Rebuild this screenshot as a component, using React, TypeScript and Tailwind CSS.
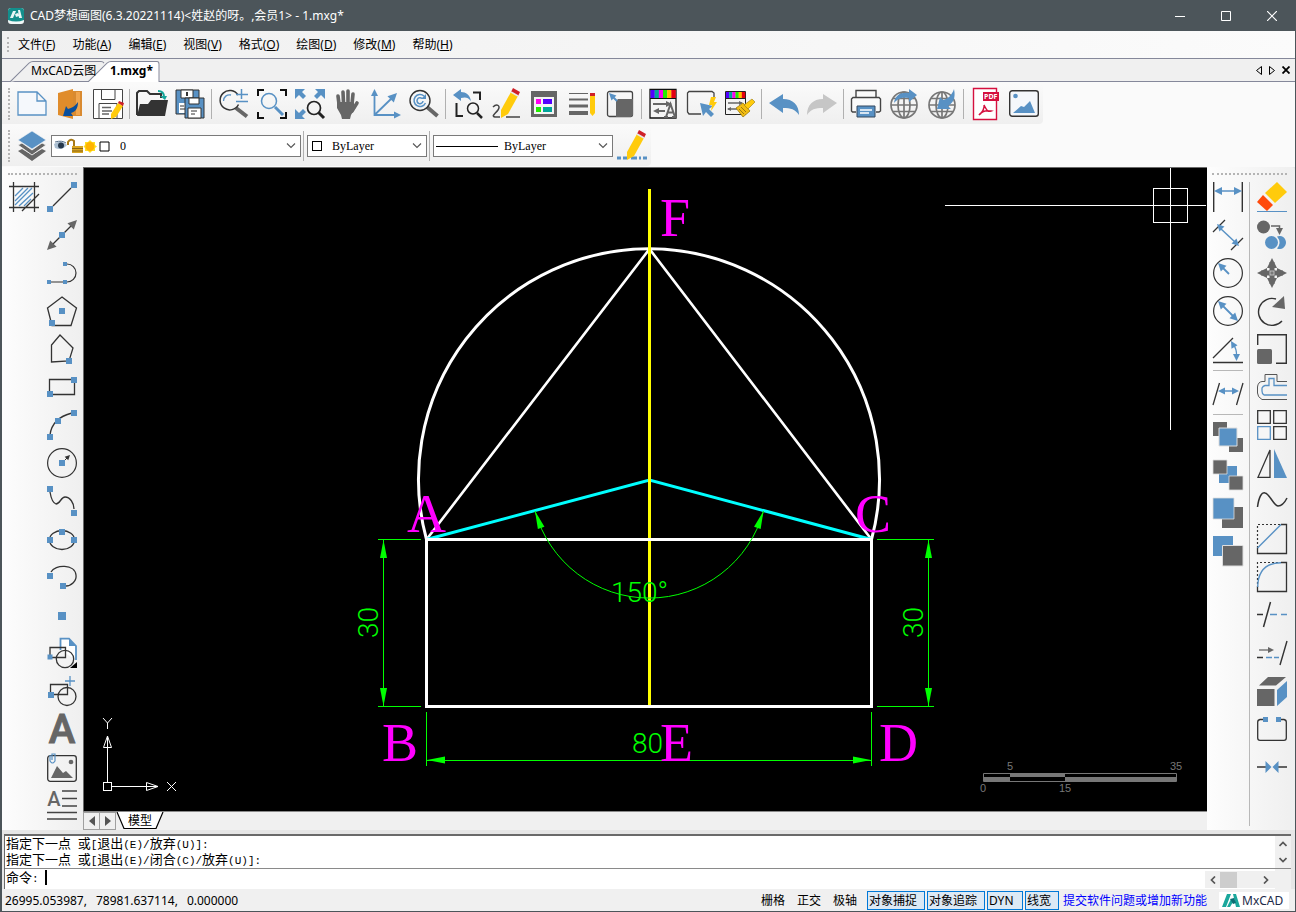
import { useState, type ReactNode } from "react";

const BLUE = "#5891c4";
const GREY = "#666666";
const DARK = "#333333";

const sans = "font-['Noto_Sans','Noto_Sans_CJK_SC',sans-serif]";

type ToolDef = { label: string; icon: ReactNode };

/* ---------- small drawing helpers, all icons live on a 30x30 grid ---------- */

function Handle({ x, y, s = 6 }: { x: number; y: number; s?: number }) {
  return <rect x={x - s / 2} y={y - s / 2} width={s} height={s} fill={BLUE} />;
}

function Head({ x, y, a, s = 7, c = BLUE }: { x: number; y: number; a: number; s?: number; c?: string }) {
  return (
    <path
      d={`M0 0L${-s} ${-s / 2}V${s / 2}Z`}
      transform={`translate(${x} ${y}) rotate(${a})`}
      fill={c}
      stroke="none"
    />
  );
}

function Pencil() {
  return (
    <g>
      <path d="M20 3L27 7L17 25L10 29L10 21Z" fill="#ffcb0c" />
      <path d="M20 3L22 -1L29 3L27 7Z" fill="#cf2028" />
      <path d="M20 3L27 7" stroke="#e8e8e8" strokeWidth="1.500" />
    </g>
  );
}

function Rainbow({ w, h }: { w: number; h: number }) {
  const colors = ["#5200ff", "#00a59b", "#ff00f0", "#22ee00", "#ffbe00", "#e60012"];
  return (
    <>
      {colors.map((c, i) => (
        <rect key={c} x={(w / 6) * i} y="0" width={w / 6 + 0.2} height={h} fill={c} />
      ))}
    </>
  );
}

function Globe() {
  return (
    <g fill="none" stroke="#777" strokeWidth="1.700">
      <circle cx="15" cy="16" r="13" />
      <ellipse cx="15" cy="16" rx="6" ry="13" />
      <path d="M15 3V29M2 16H28M4 9.500H26M4 22.500H26" />
    </g>
  );
}

/* ------------------------------- top toolbar ------------------------------- */

const topGroups: ToolDef[][] = [
  [
    {
      label: "新建",
      icon: (
        <path d="M1 3H20L29 12V26H1ZM20 3V12H29" fill="#f5f8fc" stroke={BLUE} strokeWidth="1.300" />
      ),
    },
    {
      label: "打开云图",
      icon: (
        <>
          <path d="M18 2H27V27H18Z" fill="#d98a30" />
          <path d="M21 3H25V26H21Z" fill="#f0a54e" />
          <path d="M3 4L18 0V30L3 26Z" fill="#e08c2b" />
          <path d="M23 13C23 20 20 23 16 24L18 27L8 27L11 17L13 20C17 19 20 17 23 13Z" fill="#0a4f9c" />
        </>
      ),
    },
    {
      label: "保存",
      icon: (
        <>
          <path d="M.5.500H29.500V29.500H.500Z" fill="#fff" stroke="#444" />
          <path d="M8.500.500H22V10.500H8.500ZM6 29.500V14.500H24V29.500" fill="none" stroke="#444" />
          <path d="M9 18.500H18M9 22H19M9 25H16" stroke="#666" strokeWidth="1.500" />
          <path d="M25 14L30 17L23 28L18 30L18 25Z" fill="#ffcb0c" />
          <path d="M25 14L26 12L31 14L30 17Z" fill="#cf2028" />
        </>
      ),
    },
  ],
  [
    {
      label: "打开",
      icon: (
        <>
          <path d="M0 26V4L2 2H10L13 5H24V9" fill="none" stroke={DARK} strokeWidth="2" />
          <path d="M0 27L3 15H11L14 11H31L28 27Z" fill={DARK} />
          <path d="M21 2Q27 2 27 8" fill="none" stroke="#13a59a" strokeWidth="2" />
          <path d="M23 7H30L28 11Z" fill="#13a59a" />
        </>
      ),
    },
    {
      label: "全部保存",
      icon: (
        <>
          <path d="M1 1H24V25H1Z" fill={BLUE} stroke="#333" />
          <path d="M6 1H18V9H6Z" fill="#fff" stroke="#333" />
          <path d="M12 3V7" stroke="#333" strokeWidth="2" />
          <path d="M4 14H12V24H4Z" fill="#fff" />
          <path d="M5 17H9M5 20H10" stroke="#333" />
          <path d="M10 9H29V29H10Z" fill={BLUE} stroke="#333" />
          <path d="M14 9H24V15H14ZM13 19H26V29H13Z" fill="#fff" stroke="#333" />
          <path d="M16 22H22M16 25H20" stroke="#333" />
        </>
      ),
    },
  ],
  [
    {
      label: "缩放",
      icon: (
        <>
          <path d="M17 19L28 27.500" stroke={GREY} strokeWidth="4" />
          <path d="M19 6A9.700 9.700 0 1 0 19.500 15.500" fill="none" stroke={DARK} strokeWidth="1.500" />
          <path d="M4.500 12A6 6 0 0 1 12 6" fill="none" stroke={BLUE} strokeWidth="1.300" />
          <path d="M17 5.500H29M22.500 0V10M17 12.500H29" stroke={BLUE} strokeWidth="1.500" />
        </>
      ),
    },
    {
      label: "窗口缩放",
      icon: (
        <>
          <path d="M1 7V1H7M23 1H29V7M29 23V29H23M7 29H1V23" fill="none" stroke="#111" strokeWidth="2" />
          <circle cx="12" cy="12" r="7.500" fill="none" stroke={BLUE} strokeWidth="1.500" />
          <path d="M18 18L26 26" stroke={BLUE} strokeWidth="3" />
        </>
      ),
    },
    {
      label: "范围缩放",
      icon: (
        <>
          <path d="M0 0H10L7 3L11 7L8 10L4 6L0 10ZM30 0H20L23 3L19 7L22 10L26 6L30 10ZM0 30H10L7 27L11 23L8 20L4 24L0 20Z" fill={BLUE} />
          <circle cx="19" cy="19" r="6.500" fill="none" stroke="#222" strokeWidth="1.700" />
          <path d="M23.500 23.500L29 29" stroke="#222" strokeWidth="3" />
        </>
      ),
    },
    {
      label: "平移",
      icon: (
        <>
          <path d="M6 15L5 7M10.500 14L10 3M15 14V2M19 15L20 5M19 22L24 14" stroke={GREY} strokeWidth="3.600" strokeLinecap="round" />
          <path d="M4 13H21V19L23 18L18 26L17 30H9L8 26L4 19Z" fill={GREY} />
        </>
      ),
    },
    {
      label: "坐标系",
      icon: (
        <>
          <path d="M3.500 5V26H27M3.500 26L22 8" fill="none" stroke={BLUE} strokeWidth="1.800" />
          <Head x={3.5} y={0} a={-90} />
          <Head x={30} y={26} a={0} />
          <Head x={26} y={4} a={-45} s={9} />
        </>
      ),
    },
    {
      label: "实时缩放",
      icon: (
        <>
          <path d="M18 18L28.500 27" stroke={GREY} strokeWidth="4" />
          <circle cx="11" cy="11.500" r="10" fill="none" stroke={DARK} strokeWidth="1.400" />
          <path d="M15 7A6 6 0 1 0 16.500 14M13 9.500A3 3 0 1 0 14 12" fill="none" stroke={BLUE} strokeWidth="1.500" />
          <path d="M17 5V10H12Z" fill={BLUE} />
        </>
      ),
    },
  ],
  [
    {
      label: "上一视图",
      icon: (
        <>
          <path d="M0 6L8 0V3C13 3 17 6 18 12C15 8 12 8 8 9V12Z" fill={BLUE} />
          <path d="M20 3.500H27V11M3.500 14V27H10" fill="none" stroke="#222" strokeWidth="2" />
          <circle cx="20" cy="19.500" r="5.500" fill="none" stroke="#222" strokeWidth="1.500" />
          <path d="M24 24L29 29" stroke="#222" strokeWidth="2.500" />
        </>
      ),
    },
    {
      label: "草图",
      icon: (
        <>
          <path d="M2 18C6 14 10 17 7 21C4 25 0 27 4 28L9 28M15 28H29" fill="none" stroke="#444" strokeWidth="1.500" />
          <Pencil />
        </>
      ),
    },
    {
      label: "特性",
      icon: (
        <>
          <path d="M2 2H28V28H2Z" fill={GREY} />
          <path d="M5 8H25V25H5Z" fill="#f4f4f4" />
          <path d="M7 10H12V15H7Z" fill="#ff00f0" />
          <path d="M14 10H23V15H14Z" fill="#5200ff" />
          <path d="M7 18H12V23H7Z" fill="#22ee00" />
          <path d="M14 18H23V23H14Z" fill="#00a59b" />
        </>
      ),
    },
    {
      label: "线宽设置",
      icon: (
        <>
          <path d="M2 4.500H21" stroke={GREY} />
          <path d="M2 10.500H21" stroke={GREY} strokeWidth="2" />
          <path d="M2 17H21" stroke={GREY} strokeWidth="3" />
          <path d="M2 24H21" stroke={GREY} strokeWidth="4" />
          <path d="M23 7H28V24L25.500 27L23 24Z" fill="#ffcb0c" />
          <path d="M23 4H28V7H23Z" fill="#cf2028" />
        </>
      ),
    },
    {
      label: "窗口大小",
      icon: (
        <>
          <rect x="2.500" y="2.500" width="25" height="25" rx="2" fill="none" stroke="#444" strokeWidth="1.300" />
          <path d="M11 12L13 10H28V26L26 28H11Z" fill={GREY} />
          <path d="M7 7L12 12" stroke={BLUE} strokeWidth="2" />
          <Head x={4} y={4} a={225} />
        </>
      ),
    },
  ],
  [
    {
      label: "文字样式",
      icon: (
        <>
          <path d="M1 .500H27V29H1Z" fill="#f4f4f4" stroke="#111" strokeWidth="1.300" />
          <g transform="translate(1.500 1)">
            <Rainbow w={25} h={8} />
          </g>
          <path d="M1 9.500H27" stroke="#111" />
          <path d="M4 15H22M8 22H16" stroke={GREY} strokeWidth="2" />
          <Head x={23} y={15} a={0} s={6} c={GREY} />
          <Head x={4} y={22} a={180} s={6} c={GREY} />
          <path d="M17 28L21.500 15L26 28M18.500 23.500H24.500M15 28H19M23 28H27" fill="none" stroke={GREY} strokeWidth="2" />
        </>
      ),
    },
    {
      label: "快速选择",
      icon: (
        <>
          <path d="M14 25H2L.500 23V4L2 2.500H25L27 4V9" fill="none" stroke="#444" strokeWidth="1.300" />
          <path d="M13 14L26 17L22 20L27 25L24 28L19 23L16 27Z" fill={BLUE} />
          <path d="M24 8L22 16H25L24 22L30 13H27L29 8Z" fill="#ffcb0c" />
        </>
      ),
    },
    {
      label: "特性匹配",
      icon: (
        <>
          <path d="M.500 2.500H20.500V25.500H.500Z" fill="#f4f4f4" stroke="#222" />
          <g transform="translate(1 3)">
            <Rainbow w={19} h={6} />
          </g>
          <path d="M0 9.500H21" stroke="#222" />
          <path d="M3 14H17M3 20H12" stroke={GREY} strokeWidth="1.500" />
          <Head x={18} y={14} a={0} s={4} c={GREY} />
          <Head x={2} y={20} a={180} s={4} c={GREY} />
          <path d="M11 19L18 14L25 22L18 28Z" fill="#f2bd12" stroke="#9b7a10" strokeWidth=".8" />
          <path d="M19 16L27 10L30 13L23 20Z" fill="#ffcb0c" stroke="#9b7a10" strokeWidth=".6" />
          <path d="M14 20L19 25M16 18L21 23" stroke="#9b7a10" />
        </>
      ),
    },
  ],
  [
    {
      label: "撤销",
      icon: <path d="M0 14L14 5V10C24 10 30 16 30 26C26 20 22 19 14 19V24Z" fill={BLUE} />,
    },
    {
      label: "重做",
      icon: <path d="M30 14L16 5V10C6 10 0 16 0 26C4 20 8 19 16 19V24Z" fill="#c6c6c6" />,
    },
  ],
  [
    {
      label: "打印",
      icon: (
        <>
          <path d="M5 8V1.500H25V8M5 23H1.500L.500 22V10L2 8.500H28L29.500 10V22L28 23H25" fill="#fafafa" stroke="#444" strokeWidth="1.400" />
          <path d="M6 17H24V28H6Z" fill={BLUE} stroke="#34495e" />
          <path d="M9 21H21M9 24H18" stroke="#fff" strokeWidth="1.300" />
        </>
      ),
    },
    {
      label: "发布到网络",
      icon: (
        <>
          <Globe />
          <path d="M5 14C6 6 12 3 20 4V0L28 6L20 13V9C13 8 9 9 5 14Z" fill={BLUE} />
        </>
      ),
    },
    {
      label: "从网络打开",
      icon: (
        <>
          <Globe />
          <path d="M27 0C29 9 26 14 21 17L24 20H10L13 8L16 11C21 10 25 6 27 0Z" fill={BLUE} />
        </>
      ),
    },
  ],
  [
    {
      label: "输出PDF",
      icon: (
        <>
          <path d="M2.500 -.500H25.500V30.500H2.500Z" fill="#fff" stroke="#d5103f" strokeWidth="1.400" />
          <path d="M12 3H28V12H12Z" fill="#d5103f" />
          <text x="13" y="10" fontSize="7" fontWeight="700" fill="#fff" fontFamily="Open Sans, sans-serif">
            PDF
          </text>
          <path d="M8 26C11 24 14 19 13 16C16 22 17 23 20 22C15 21 11 22 8 26Z" fill="none" stroke="#d5103f" strokeWidth="1.500" />
        </>
      ),
    },
    {
      label: "输出图片",
      icon: (
        <>
          <rect x=".700" y="1.700" width="28.600" height="25.600" rx="2.500" fill="#f4f7fb" stroke={DARK} strokeWidth="1.400" />
          <circle cx="6.500" cy="7" r="2.300" fill={BLUE} />
          <path d="M4 24L12 17L15 18L21 12L26 24Z" fill={BLUE} />
        </>
      ),
    },
  ],
];

/* ------------------------------- left toolbar ------------------------------ */

const hatch: ToolDef = {
  label: "图案填充",
  icon: (
    <>
      <path d="M6 14L14 6M6 19L19 6M6 23L23 6M10 24L24 11M15 24L22 17" stroke={BLUE} strokeWidth="1.300" />
      <path d="M4.500 0V30M25.500 0V30M0 4.500H30M0 25.500H30M30 12L13 29" stroke={DARK} strokeWidth="1.300" />
    </>
  ),
};

const drawTools: ToolDef[] = [
  {
    label: "直线",
    icon: (
      <>
        <path d="M6 24L24 6" stroke={DARK} strokeWidth="1.300" />
        <Handle x={3} y={27} />
        <Handle x={27} y={3} />
      </>
    ),
  },
  {
    label: "构造线",
    icon: (
      <>
        <path d="M5 25L25 5" stroke={DARK} strokeWidth="1.300" />
        <Head x={30} y={0} a={-45} s={9} c={GREY} />
        <Head x={0} y={30} a={135} s={9} c={GREY} />
        <Handle x={15} y={15} />
      </>
    ),
  },
  {
    label: "多段线",
    icon: (
      <>
        <path d="M4 24H18M20 6A9 9 0 0 1 20 24" fill="none" stroke={DARK} strokeWidth="1.200" />
        <Handle x={18} y={6} s={4} />
        <Handle x={2} y={24} s={4} />
        <Handle x={18} y={24} s={4} />
      </>
    ),
  },
  {
    label: "正多边形",
    icon: (
      <>
        <path d="M15 1L29.500 12L24 29.500H5L.500 12Z" fill="none" stroke={DARK} strokeWidth="1.300" />
        <Handle x={15} y={15} />
        <Handle x={5} y={27} />
      </>
    ),
  },
  {
    label: "多边形",
    icon: (
      <>
        <path d="M13 1L26 14L22 27L4.500 28V11Z" fill="none" stroke={DARK} strokeWidth="1.300" />
        <Handle x={22} y={27} />
      </>
    ),
  },
  {
    label: "矩形",
    icon: (
      <>
        <path d="M2.500 7.500H27.500V22.500H2.500Z" fill="none" stroke={DARK} strokeWidth="1.300" />
        <Handle x={27} y={8} />
        <Handle x={3} y={22} />
      </>
    ),
  },
  {
    label: "圆弧",
    icon: (
      <>
        <path d="M3 25Q5 8 25 3" fill="none" stroke={DARK} strokeWidth="1.300" />
        <Handle x={27} y={3} />
        <Handle x={11} y={11} />
        <Handle x={3} y={27} />
      </>
    ),
  },
  {
    label: "圆",
    icon: (
      <>
        <circle cx="15" cy="15" r="14.400" fill="none" stroke={DARK} strokeWidth="1.200" />
        <path d="M16 14L21 9" stroke={DARK} />
        <Head x={23} y={7} a={-45} s={5} c={DARK} />
        <Handle x={15} y={15} />
      </>
    ),
  },
  {
    label: "样条曲线",
    icon: (
      <>
        <path d="M3 6C4 12 6 17 9 18C13 18 14 11 18 11C23 11 27 17 27 23" fill="none" stroke={DARK} strokeWidth="1.300" />
        <Handle x={3} y={3} />
        <Handle x={27} y={27} />
      </>
    ),
  },
  {
    label: "椭圆",
    icon: (
      <>
        <ellipse cx="15" cy="16" rx="12.500" ry="9.500" fill="none" stroke={DARK} strokeWidth="1.300" />
        <Handle x={15} y={8} />
        <Handle x={3} y={16} />
        <Handle x={27} y={16} />
      </>
    ),
  },
  {
    label: "椭圆弧",
    icon: (
      <>
        <path d="M4 10C8 2 28 2 29 13C30 19 24 24 19 24" fill="none" stroke={DARK} strokeWidth="1.300" />
        <Handle x={3} y={14} />
        <Handle x={16} y={24} />
      </>
    ),
  },
  { label: "点", icon: <Handle x={15} y={16} s={8} /> },
  {
    label: "插入块",
    icon: (
      <>
        <path d="M13.500 12V.700H22L29 8V22" fill="#fff" stroke={BLUE} strokeWidth="1.800" />
        <path d="M22 1V8H29Z" fill={BLUE} />
        <path d="M3 9.500H18.500V19.500H3Z" fill="none" stroke={DARK} strokeWidth="1.300" />
        <circle cx="18" cy="21" r="8.700" fill="none" stroke={DARK} strokeWidth="1.300" />
        <Handle x={3} y={19} s={5} />
        <path d="M30 24V30H23Z" fill="#000" />
      </>
    ),
  },
  {
    label: "创建块",
    icon: (
      <>
        <path d="M3.500 8.500H20.500V18.500H3.500Z" fill="none" stroke={DARK} strokeWidth="1.300" />
        <circle cx="20" cy="20.500" r="9" fill="none" stroke={DARK} strokeWidth="1.300" />
        <path d="M18 5H28M23 0V10" stroke={BLUE} strokeWidth="1.300" />
        <Handle x={4} y={19} />
      </>
    ),
  },
  {
    label: "单行文字",
    icon: (
      <text x="15" y="29" fontSize="40" fontWeight="500" fill={GREY} stroke={GREY} textAnchor="middle" fontFamily="Roboto, sans-serif">
        A
      </text>
    ),
  },
  {
    label: "插入图片",
    icon: (
      <>
        <rect x=".700" y="3.700" width="28.600" height="25.600" rx="2.500" fill="none" stroke={DARK} strokeWidth="1.300" />
        <path d="M3 3V9Q5.500 13 8 9V2H5V8" fill="none" stroke={BLUE} strokeWidth="1.200" />
        <circle cx="24" cy="10" r="2.300" fill={GREY} />
        <path d="M4 26L10 14L16 21L19 19L26 26Z" fill={GREY} />
      </>
    ),
  },
  {
    label: "多行文字",
    icon: (
      <>
        <text x="7" y="16" fontSize="20" fontWeight="500" fill={GREY} textAnchor="middle" fontFamily="Roboto, sans-serif">
          A
        </text>
        <path d="M15 1H30M15 8.500H30M15 16H30M0 22.500H30M0 29H30" stroke="#444" strokeWidth="1.400" />
      </>
    ),
  },
];

/* ------------------------------ right toolbar ------------------------------ */

const dimTools: ToolDef[] = [
  {
    label: "线性标注",
    icon: (
      <>
        <path d="M.700 0V30M29.300 0V30" stroke={DARK} strokeWidth="1.400" />
        <path d="M6 9H24" stroke={BLUE} strokeWidth="1.500" />
        <Head x={1} y={9} a={180} s={8} />
        <Head x={29} y={9} a={0} s={8} />
      </>
    ),
  },
  {
    label: "对齐标注",
    icon: (
      <>
        <path d="M0 12L12 0M18 30L30 18" stroke={DARK} strokeWidth="1.300" />
        <path d="M7 8L22 22" stroke={BLUE} strokeWidth="1.500" />
        <Head x={4} y={4} a={225} />
        <Head x={26} y={26} a={45} />
      </>
    ),
  },
  {
    label: "半径标注",
    icon: (
      <>
        <circle cx="15" cy="15" r="14.400" fill="none" stroke={DARK} strokeWidth="1.200" />
        <path d="M8 8L16 16" stroke={BLUE} strokeWidth="1.800" />
        <Head x={5} y={5} a={225} s={8} />
      </>
    ),
  },
  {
    label: "直径标注",
    icon: (
      <>
        <circle cx="15" cy="15" r="14.400" fill="none" stroke={DARK} strokeWidth="1.200" />
        <path d="M8 8L22 22" stroke={BLUE} strokeWidth="1.800" />
        <Head x={5} y={5} a={225} s={8} />
        <Head x={25} y={25} a={45} s={8} />
      </>
    ),
  },
  {
    label: "角度标注",
    icon: (
      <>
        <path d="M0 24L20 4M0 28.500H30" stroke={DARK} strokeWidth="1.300" />
        <path d="M20 10Q24 15 23.500 22" fill="none" stroke={BLUE} strokeWidth="1.300" />
        <Head x={18} y={7} a={240} />
        <Head x={23.5} y={27} a={90} />
      </>
    ),
  },
];

const editDim: ToolDef = {
  label: "编辑标注",
  icon: (
    <>
      <path d="M0 27L6.500 5M23.500 27L30 5" stroke={DARK} strokeWidth="1.300" />
      <path d="M9 13H23" stroke={BLUE} strokeWidth="1.500" />
      <Head x={5} y={13} a={180} />
      <Head x={26} y={13} a={0} />
    </>
  ),
};

const orderTools: ToolDef[] = [
  {
    label: "前置",
    icon: (
      <>
        <path d="M0 1H14V15H0ZM16 17H30V31H16Z" fill={GREY} />
        <path d="M6 7H24V25H6Z" fill={BLUE} stroke="#ddd" />
      </>
    ),
  },
  {
    label: "后置",
    icon: (
      <>
        <path d="M6 7H24V24H6Z" fill={BLUE} />
        <path d="M0 1H14V15H0ZM16 17H30V31H16Z" fill={GREY} stroke="#ddd" strokeWidth=".8" />
      </>
    ),
  },
  {
    label: "置于对象之上",
    icon: (
      <>
        <path d="M9 10H30V31H9Z" fill={GREY} />
        <path d="M0 1H21V22H0Z" fill={BLUE} stroke="#ddd" strokeWidth=".8" />
      </>
    ),
  },
  {
    label: "置于对象之下",
    icon: (
      <>
        <path d="M0 1H20V21H0Z" fill={BLUE} />
        <path d="M9.500 10.500H30V31H9.500Z" fill={GREY} stroke="#ddd" />
      </>
    ),
  },
];

const modifyTools: ToolDef[] = [
  {
    label: "删除",
    icon: (
      <>
        <path d="M20 0L30 10L18 21L8 11Z" fill="#ffcb0c" />
        <path d="M6 13L16 23L10 29L0 20Z" fill="#ff4a0c" />
        <path d="M0 29.500H30" stroke={BLUE} />
      </>
    ),
  },
  {
    label: "复制",
    icon: (
      <>
        <circle cx="6.500" cy="7" r="6.500" fill={GREY} />
        <path d="M14 6H22.500V11" fill="none" stroke={GREY} strokeWidth="1.500" />
        <Head x={22.5} y={15} a={90} c={GREY} />
        <circle cx="14.500" cy="22.500" r="6.500" fill={BLUE} />
        <path d="M20 16.500A6.500 6.500 0 1 1 20 28.500Q25 22.500 20 16.500Z" fill={BLUE} />
      </>
    ),
  },
  {
    label: "移动",
    icon: (
      <>
        <path d="M15 4V26M4 15H26" stroke={GREY} strokeWidth="5" />
        <Head x={15} y={0} a={-90} s={10} c={GREY} />
        <Head x={15} y={30} a={90} s={10} c={GREY} />
        <Head x={0} y={15} a={180} s={10} c={GREY} />
        <Head x={30} y={15} a={0} s={10} c={GREY} />
        <path d="M13 13H17V17H13Z" fill="#777" stroke="#ccc" strokeWidth=".8" />
      </>
    ),
  },
  {
    label: "旋转",
    icon: (
      <>
        <path d="M19 3A13.500 13.500 0 1 0 25 25" fill="none" stroke={DARK} strokeWidth="1.400" />
        <path d="M27 0L28 13L15 11Z" fill={GREY} />
      </>
    ),
  },
  {
    label: "缩放对象",
    icon: (
      <>
        <path d="M.700 11V.700H29.300V29.300H19" fill="none" stroke={DARK} strokeWidth="1.400" />
        <rect x="0" y="15" width="15" height="15" rx="1.500" fill={GREY} />
      </>
    ),
  },
  {
    label: "偏移",
    icon: (
      <>
        <path d="M30 27.500H5Q.500 25 .500 21V15Q1 10 5 9.500H8V2.500H20V9.500H30" fill="none" stroke="#555" />
        <path d="M30 23H7Q5 22 5 19V16Q6 14 8 13.500H12V6.500H17V13.500H30" fill="none" stroke={BLUE} strokeWidth="1.300" />
      </>
    ),
  },
  {
    label: "阵列",
    icon: (
      <>
        <path d="M.700.700H13.300V13.300H.700ZM16.700.700H29.300V13.300H16.700ZM16.700 16.700H29.300V29.300H16.700Z" fill="#f6f6f6" stroke={DARK} strokeWidth="1.300" />
        <path d="M.700 16.700H13.300V29.300H.700Z" fill="#f6f6f6" stroke={BLUE} strokeWidth="1.300" />
      </>
    ),
  },
  {
    label: "镜像",
    icon: (
      <>
        <path d="M13 2V29.300H1Z" fill="none" stroke={DARK} strokeWidth="1.300" />
        <path d="M17 1L30 30H17Z" fill={BLUE} />
      </>
    ),
  },
  {
    label: "编辑样条",
    icon: <path d="M.500 21C2 10 5 6 8 7C13 8 16 19 21 20C25 20 28 16 30 12" fill="none" stroke={DARK} strokeWidth="1.500" />,
  },
  {
    label: "倒角",
    icon: (
      <>
        <path d="M.500 24V.500H24" fill="none" stroke={DARK} strokeWidth="1.200" strokeDasharray="2 2" />
        <path d="M24 .500H29.500V29.500H.500V24" fill="none" stroke={DARK} strokeWidth="1.300" />
        <path d="M.500 24L24 .500" stroke={BLUE} strokeWidth="1.400" />
      </>
    ),
  },
  {
    label: "圆角",
    icon: (
      <>
        <path d="M.500 22V.500H24" fill="none" stroke={DARK} strokeWidth="1.200" strokeDasharray="2 2" />
        <path d="M24 .500H29.500V29.500H.500V24" fill="none" stroke={DARK} strokeWidth="1.300" />
        <path d="M.700 25Q1 1 24 .700" fill="none" stroke={BLUE} strokeWidth="1.400" />
      </>
    ),
  },
  {
    label: "修剪",
    icon: (
      <>
        <path d="M0 14.500H6M6.500 27L13.500 2" stroke={DARK} strokeWidth="1.500" />
        <path d="M13 14.500H20M24 14.500H30" stroke={BLUE} strokeWidth="1.500" />
      </>
    ),
  },
  {
    label: "延伸",
    icon: (
      <>
        <path d="M2 12H13" stroke={GREY} strokeWidth="1.300" />
        <Head x={17} y={12} a={0} s={6} c={GREY} />
        <path d="M0 19.500H6M23 27L30 3" stroke={DARK} strokeWidth="1.400" />
        <path d="M9 19.500H15M17 19.500H22" stroke={BLUE} strokeWidth="1.400" />
      </>
    ),
  },
  {
    label: "分解",
    icon: (
      <>
        <path d="M11 1H29L19 9.500H2ZM0 13H17.500V30H0Z" fill={GREY} />
        <path d="M20 14L30 5V21L20 30Z" fill={BLUE} />
      </>
    ),
  },
  {
    label: "打断",
    icon: (
      <>
        <path d="M7 5.500H3Q.700 6 .700 8V24Q.700 26.300 3 26.300H27Q29.300 26.300 29.300 24V8Q29.300 6 27 5.500H23" fill="none" stroke={DARK} strokeWidth="1.300" />
        <Handle x={8.5} y={5.5} s={5} />
        <Handle x={21.5} y={5.5} s={5} />
      </>
    ),
  },
  {
    label: "合并",
    icon: (
      <>
        <path d="M0 15H9M21 15H30" stroke={DARK} strokeWidth="1.400" />
        <path d="M8.500 9L14.500 15L8.500 21ZM21.500 9L15.500 15L21.500 21Z" fill={BLUE} />
      </>
    ),
  },
];

/* -------------------------------- components ------------------------------- */

function Tool({ label, icon }: ToolDef) {
  return (
    <button type="button" aria-label={label} className="flex h-[38px] w-[38px] shrink-0 items-center justify-center hover:bg-[#d9eafa]">
      <svg viewBox="0 0 30 30" className="h-[30px] w-[30px] overflow-visible">
        {icon}
      </svg>
    </button>
  );
}

function GripV() {
  return <span className="w-0 self-stretch border-l-2 border-dotted border-[#b4b4b4]" />;
}

function Divider() {
  return <span className="mx-[2px] h-[30px] w-[2px] border-l border-[#b0b0b0]" />;
}

function Chevron() {
  return (
    <svg viewBox="0 0 10 6" className="mr-1 h-[6px] w-[10px] shrink-0">
      <path d="M1 .500L5 4.500L9 .500" fill="none" stroke="#555" strokeWidth="1.100" />
    </svg>
  );
}

function TitleBar() {
  return (
    <header className="flex h-[31px] shrink-0 items-center bg-[#4c555a] pl-2 pr-px text-white">
      <svg viewBox="0 0 16 16" className="h-4 w-4">
        <rect width="16" height="16" rx="3" fill="#f2f7f7" />
        <path d="M0 3Q0 0 3 0H13Q16 0 16 3V12Q8 15 0 12Z" fill="#138f8c" />
        <path d="M5 3H8L5 10H2ZM10 2H12L14 10H11ZM7 6L10 5L11 8L8 9Z" fill="#e8f6f5" />
      </svg>
      <h1 className="ml-1.5 grow text-[12px] leading-4">CAD梦想画图(6.3.20221114)&lt;姓赵的呀。,会员1&gt; - 1.mxg*</h1>
      <button type="button" aria-label="最小化" className="flex h-full w-[46px] items-center justify-center">
        <svg viewBox="0 0 10 10" className="h-[10px] w-[10px]">
          <path d="M0 5.500H10" stroke="#fff" />
        </svg>
      </button>
      <button type="button" aria-label="最大化" className="flex h-full w-[46px] items-center justify-center">
        <svg viewBox="0 0 10 10" className="h-[10px] w-[10px]">
          <path d="M.500.500H9.500V9.500H.500Z" fill="none" stroke="#fff" />
        </svg>
      </button>
      <button type="button" aria-label="关闭" className="flex h-full w-[46px] items-center justify-center">
        <svg viewBox="0 0 10 10" className="h-[10px] w-[10px]">
          <path d="M0 0L10 10M10 0L0 10" stroke="#fff" strokeWidth="1.200" />
        </svg>
      </button>
    </header>
  );
}

const menus = [
  ["文件", "F"],
  ["功能", "A"],
  ["编辑", "E"],
  ["视图", "V"],
  ["格式", "O"],
  ["绘图", "D"],
  ["修改", "M"],
  ["帮助", "H"],
];

function MenuBar() {
  return (
    <nav className="flex h-[27px] shrink-0 items-center gap-[17px] bg-linear-to-r from-[#f0f0f0] to-[#fbfbfb] pl-[5px] text-[12px]">
      <span className="h-[15px] w-0 border-l-2 border-dotted border-[#b4b4b4]" />
      {menus.map(([name, key], i) => (
        <button key={key} type="button" className={i === 0 ? "-ml-2" : ""}>
          {name}(<span className="underline">{key}</span>)
        </button>
      ))}
    </nav>
  );
}

function FileTabs() {
  return (
    <div className="flex h-[24px] shrink-0 items-end border-y border-[#85889a] bg-[#f0f0f0] text-[12px]">
      <div className="relative flex h-[20px] items-center">
        <svg viewBox="0 0 160 20" className="absolute left-0 top-0 h-[21px] w-[160px]" preserveAspectRatio="none">
          <path d="M8 20L27 2Q29 .500 31 .500H99Q101 .500 102 2" fill="#f0f0f0" stroke="#85889a" />
          <path d="M86 20L105 2Q107 .500 109 .500H155Q157 .500 157 3V20" fill="#fff" stroke="#85889a" />
        </svg>
        <button type="button" className="relative ml-[29px] w-[67px] whitespace-nowrap text-left">
          MxCAD云图
        </button>
        <button type="button" className="relative ml-3 font-bold">
          1.mxg*
        </button>
      </div>
      <div className="ml-auto flex h-full items-center gap-[7px] pr-[5px]">
        <button type="button" aria-label="上一个">
          <svg viewBox="0 0 6 9" className="h-[9px] w-[6px]">
            <path d="M5.500.500V8.500L.500 4.500Z" fill="none" stroke="#000" />
          </svg>
        </button>
        <button type="button" aria-label="下一个">
          <svg viewBox="0 0 6 9" className="h-[9px] w-[6px]">
            <path d="M.500.500V8.500L5.500 4.500Z" fill="none" stroke="#000" />
          </svg>
        </button>
        <button type="button" aria-label="关闭图纸">
          <svg viewBox="0 0 8 8" className="h-[8px] w-[8px]">
            <path d="M.500.500L7.500 7.500M7.500.500L.500 7.500" stroke="#000" strokeWidth="1.800" />
          </svg>
        </button>
      </div>
    </div>
  );
}

function Toolbars() {
  return (
    <div className="flex shrink-0 flex-col items-start gap-[2px] bg-[#fafafa] pb-px pt-[2px]">
      <div className="flex h-[40px] items-center rounded-r bg-linear-to-b from-[#fafafa] to-[#efefef] py-1 pl-[6px]">
        <GripV />
        <span className="w-[3px]" />
        {topGroups.map((group, i) => (
          <div key={i} className="flex items-center">
            {i > 0 && <Divider />}
            {group.map((t) => (
              <Tool key={t.label} {...t} />
            ))}
          </div>
        ))}
      </div>
      <div className="flex h-[40px] items-center rounded-r bg-linear-to-b from-[#fafafa] to-[#efefef] py-1 pl-[6px] font-['Liberation_Serif',serif] text-[12px]">
        <GripV />
        <span className="w-[3px]" />
        <Tool
          label="图层管理"
          icon={
            <>
              <path d="M1 20L5 18L15 24L25 18L29 20L15 30Z" fill={GREY} />
              <path d="M1 14L5 12L15 19L25 12L29 14L15 24Z" fill={GREY} stroke="#f6f6f6" strokeWidth=".8" />
              <path d="M15 0L29 9L15 18L1 9Z" fill={BLUE} stroke="#f6f6f6" strokeWidth=".6" />
            </>
          }
        />
        <div className="flex h-[22px] w-[250px] items-center border border-[#7a7a7a] bg-white pl-[2px]">
          <svg viewBox="0 0 60 16" className="h-4 w-[60px] shrink-0">
            <path d="M0 6Q7 1 13 7Q8 13 1 10Z" fill="#a9bdd0" />
            <path d="M1 4Q8 2 12 5" fill="none" stroke="#58708a" />
            <circle cx="7" cy="7.500" r="3" fill="#26384c" />
            <path d="M14 7V4Q17 0 20 3V9" fill="none" stroke="#a87a18" strokeWidth="2" />
            <rect x="18" y="8" width="11" height="7" fill="#d9a520" />
            <path d="M18 10.500H29M18 13H29" stroke="#8a6410" />
            <path d="M36 2L38 4L41 4V7L43 8.500L41 10V13H38L36 15L34 13H31V10L29.500 8.500L31 7V4H34Z" fill="#ffe020" />
            <circle cx="36" cy="8.500" r="4.500" fill="#ffb400" />
            <path d="M46 4H55V13H46Z" fill="#fff" stroke="#000" />
          </svg>
          <select aria-label="图层" className="grow appearance-none bg-transparent pl-1.5 outline-none">
            <option>0</option>
          </select>
          <Chevron />
        </div>
        <Divider />
        <div className="flex h-[22px] w-[120px] items-center border border-[#7a7a7a] bg-white pl-1">
          <span className="h-[10px] w-[10px] border border-black" />
          <select aria-label="颜色" className="ml-2.5 grow appearance-none bg-transparent outline-none">
            <option>ByLayer</option>
          </select>
          <Chevron />
        </div>
        <Divider />
        <div className="flex h-[22px] w-[180px] items-center border border-[#7a7a7a] bg-white pl-[2px]">
          <span className="h-px w-[62px] bg-black" />
          <select aria-label="线型" className="ml-[6px] grow appearance-none bg-transparent outline-none">
            <option>ByLayer</option>
          </select>
          <Chevron />
        </div>
        <Tool
          label="线型管理"
          icon={
            <>
              <path d="M0 27H4M6 27H10M14 27H20M22 27H24M26 27H30" stroke={BLUE} strokeWidth="3" />
              <Pencil />
            </>
          }
        />
      </div>
    </div>
  );
}

const magenta = [
  { t: "F", x: 660, y: 236 },
  { t: "A", x: 407, y: 532 },
  { t: "C", x: 855, y: 532 },
  { t: "B", x: 382, y: 761 },
  { t: "E", x: 660, y: 761 },
  { t: "D", x: 879, y: 761 },
];

function ArrowTip({ x, y, a }: { x: number; y: number; a: number }) {
  return <path d="M0 0L-18 -3.500V3.500Z" fill="#0f0" transform={`translate(${x} ${y}) rotate(${a})`} />;
}

function Drawing() {
  return (
    <svg
      viewBox="84 168 1122 643"
      preserveAspectRatio="xMinYMin meet"
      className="block min-h-0 w-full grow border-l border-t border-[#6a6a6a] bg-black"
      role="img"
      aria-label="图形窗口"
    >
      <g fill="none" stroke="#fff" strokeWidth="3">
        <path d="M426.500 539.500A230.500 230.500 0 1 1 871.500 539.500" />
        <path d="M426.500 539.500L649.500 249L871.500 539.500" strokeWidth="2.600" />
      </g>
      <path d="M426.500 539.500L649.500 480L871.500 539.500" fill="none" stroke="#0ff" strokeWidth="3" />
      <path d="M649.500 189V706" stroke="#ff0" strokeWidth="3" />
      <path d="M426.500 539.500H871.500V706.500H426.500Z" fill="none" stroke="#fff" strokeWidth="3" />

      <g fill="none" stroke="#0f0" shapeRendering="crispEdges">
        <path d="M378 539.500H421M378 706.500H421M383.500 540V706" />
        <path d="M877 539.500H934M877 706.500H934M928.500 540V706" />
        <path d="M426.500 712V766M871.500 712V766M427 760.500H871" />
      </g>
      <path d="M535 511A118.500 118.500 0 0 0 763.500 511" fill="none" stroke="#0f0" />
      <ArrowTip x={383.5} y={540} a={-90} />
      <ArrowTip x={383.5} y={706} a={90} />
      <ArrowTip x={928.5} y={540} a={-90} />
      <ArrowTip x={928.5} y={706} a={90} />
      <ArrowTip x={427} y={760} a={180} />
      <ArrowTip x={871} y={760} a={0} />
      <ArrowTip x={535} y={511} a={-110} />
      <ArrowTip x={763.5} y={511} a={-70} />

      <g fill="#0f0" fontFamily="Roboto, sans-serif" fontWeight="300" fontSize="28">
        <text x="611" y="602">150°</text>
        <text x="632" y="753">80</text>
        <text transform="translate(378 638) rotate(-90)">30</text>
        <text transform="translate(923 638) rotate(-90)">30</text>
      </g>
      <g fill="#f0f" fontFamily="Liberation Serif, serif" fontSize="54">
        {magenta.map((m) => (
          <text key={m.t} x={m.x} y={m.y}>
            {m.t}
          </text>
        ))}
      </g>

      <g fill="none" stroke="#fff" shapeRendering="crispEdges">
        <path d="M945 205.500H1206M1170.500 168V430" />
        <path d="M1153.500 188.500H1187.500V222.500H1153.500Z" />
        <path d="M103.500 782.500H111.500V790.500H103.500ZM107.500 782V748M112 786.500H146" />
      </g>
      <g fill="none" stroke="#fff">
        <path d="M107.500 736L103.500 747.500H111.500ZM107.500 736V748M158 786.500L146.500 782.500V790.500ZM146 786.500H158" />
        <path d="M103 718L107.500 723L112 718M107.500 723V729M167 782L176 791M176 782L167 791" />
      </g>

      <path d="M983.500 773.500H1176.500V781.500H983.500Z" fill="none" stroke="#777" />
      <path d="M984 777H1010V781H984ZM1010 774H1065V777H1010ZM1065 777H1176V781H1065Z" fill="#777" />
      <g fill="#777" fontFamily="Liberation Sans, sans-serif" fontSize="11" textAnchor="middle">
        <text x="1010" y="770">5</text>
        <text x="1176" y="770">35</text>
        <text x="983" y="792">0</text>
        <text x="1065" y="792">15</text>
      </g>
    </svg>
  );
}

function Workspace() {
  return (
    <main className="flex min-h-0 grow">
      <aside className="flex w-[81px] shrink-0 flex-col bg-linear-to-r from-[#fdfdfd] to-[#efefef]">
        <span className="mx-[6px] mt-[6px] mb-[3px] border-t-2 border-dotted border-[#b4b4b4]" />
        <div className="flex pl-[3px]">
          <Tool {...hatch} />
          <div className="flex flex-col">
            {drawTools.map((t) => (
              <Tool key={t.label} {...t} />
            ))}
          </div>
        </div>
      </aside>
      <section className="flex min-w-0 grow flex-col">
        <Drawing />
        <div className="flex h-[19px] shrink-0 items-stretch border-t border-[#8a8a8a] bg-[#f0f0f0] text-[12px]">
          <button type="button" aria-label="向左" className="flex w-[17px] items-center justify-center border border-[#a0a0a0]">
            <svg viewBox="0 0 6 10" className="h-[10px] w-[6px]">
              <path d="M6 0V10L0 5Z" fill="#555" />
            </svg>
          </button>
          <button type="button" aria-label="向右" className="flex w-[16px] items-center justify-center border border-l-0 border-[#a0a0a0]">
            <svg viewBox="0 0 6 10" className="h-[10px] w-[6px]">
              <path d="M0 0V10L6 5Z" fill="#555" />
            </svg>
          </button>
          <button type="button" className="relative w-[48px] leading-4">
            <svg viewBox="0 0 48 17" className="absolute inset-0 h-[17px] w-full">
              <path d="M1 0L8 16.500H40L47 0" fill="#fff" stroke="#000" strokeWidth="1.200" />
            </svg>
            <span className="relative">模型</span>
          </button>
        </div>
      </section>
      <aside className="flex w-[88px] shrink-0 flex-col rounded-tr bg-linear-to-r from-[#fdfdfd] to-[#efefef]">
        <span className="mr-[8px] ml-[5px] mt-[6px] mb-[3px] border-t-2 border-dotted border-[#b4b4b4]" />
        <div className="flex min-h-0 grow pl-[2px]">
          <div className="flex flex-col items-center">
            {dimTools.map((t) => (
              <Tool key={t.label} {...t} />
            ))}
            <span className="mt-[2px] mb-[3px] h-px w-[30px] shrink-0 bg-[#b8b8b8]" />
            <Tool {...editDim} />
            <span className="my-[2px] h-px w-[30px] shrink-0 bg-[#b8b8b8]" />
            {orderTools.map((t) => (
              <Tool key={t.label} {...t} />
            ))}
          </div>
          <span className="my-1 mr-[3px] ml-[2px] w-px bg-[#b8b8b8]" />
          <div className="flex flex-col">
            {modifyTools.map((t) => (
              <Tool key={t.label} {...t} />
            ))}
          </div>
        </div>
      </aside>
    </main>
  );
}

// Latin runs are set narrower so that two of them take the width of one hanzi
function ConsoleText({ text }: { text: string }) {
  return (
    <>
      {text.split(/([ -~]+)/).map((part, i) =>
        i % 2 ? (
          <span key={i} className="whitespace-pre font-['Liberation_Mono',monospace] text-[11px]">
            {part}
          </span>
        ) : (
          part
        ),
      )}
    </>
  );
}

function CommandPanel() {
  const [command, setCommand] = useState("");
  const log = ["指定下一点 或[退出(E)/放弃(U)]:", "指定下一点 或[退出(E)/闭合(C)/放弃(U)]:"];

  return (
    <div className="mt-1 mr-1 ml-[2px] shrink-0 border-t-2 border-l border-[#6a6a6a] bg-white font-['Noto_Sans_CJK_SC',sans-serif] text-[13px]">
      <div className="flex h-[33px] border-b border-[#8a8a8a]">
        <div className="grow pl-px">
          {log.map((line) => (
            <p key={line} className="h-4 leading-[14px]">
              <ConsoleText text={line} />
            </p>
          ))}
        </div>
        <div className="flex w-4 flex-col items-center justify-around bg-[#f0f0f0]">
          <button type="button" aria-label="向上滚动" className="flex h-4 items-center">
            <svg viewBox="0 0 8 6" className="h-[6px] w-[8px]">
              <path d="M.500 5L4 1.500L7.500 5" fill="none" stroke="#555" strokeWidth="1.700" />
            </svg>
          </button>
          <button type="button" aria-label="向下滚动" className="flex h-4 items-center">
            <svg viewBox="0 0 8 6" className="h-[6px] w-[8px]">
              <path d="M.500 1L4 4.500L7.500 1" fill="none" stroke="#555" strokeWidth="1.700" />
            </svg>
          </button>
        </div>
      </div>
      <div className="flex h-5 items-start">
        <label htmlFor="command" className="pl-px leading-4">
          <ConsoleText text="命令: " />
        </label>
        <span className="mt-px h-[15px] w-[2px] bg-black" />
        <input
          id="command"
          className="h-4 grow outline-none"
          value={command}
          onChange={(e) => setCommand(e.target.value)}
        />
        <div className="mt-[2px] flex h-[17px] w-[70px] items-center bg-[#f0f0f0]">
          <button type="button" aria-label="向左滚动" className="flex w-[15px] justify-center">
            <svg viewBox="0 0 6 8" className="h-[8px] w-[6px]">
              <path d="M5 .500L1.500 4L5 7.500" fill="none" stroke="#555" strokeWidth="1.700" />
            </svg>
          </button>
          <span className="h-[16px] w-[17px] bg-[#cdcdcd]" />
          <button type="button" aria-label="向右滚动" className="ml-auto mr-1.5 flex">
            <svg viewBox="0 0 6 8" className="h-[8px] w-[6px]">
              <path d="M1 .500L4.500 4L1 7.500" fill="none" stroke="#555" strokeWidth="1.700" />
            </svg>
          </button>
        </div>
        <span className="w-4 self-stretch bg-[#f0f0f0]" />
      </div>
    </div>
  );
}

const modes = [
  { name: "栅格", on: false, w: "w-[36px]" },
  { name: "正交", on: false, w: "w-[36px]" },
  { name: "极轴", on: false, w: "w-[36px]" },
  { name: "对象捕捉", on: true, w: "w-[58px]" },
  { name: "对象追踪", on: true, w: "w-[58px]" },
  { name: "DYN", on: true, w: "w-[36px]" },
  { name: "线宽", on: true, w: "w-[34px]" },
];

function StatusBar() {
  return (
    <footer className="flex h-[22px] shrink-0 items-center bg-[#f0f0f0] pl-[3px] pr-1.5 pt-px text-[12px] leading-4">
      <div className="flex grow gap-[9px]">
        <span>26995.053987,</span>
        <span>78981.637114,</span>
        <span>0.000000</span>
      </div>
      {modes.map((m) => (
        <button
          key={m.name}
          type="button"
          aria-pressed={m.on}
          className={
            "h-[19px] whitespace-nowrap border pl-px text-left " +
            m.w +
            (m.on ? " mr-[2px] border-[#0078d7] bg-[#dce9f5]" : " border-transparent")
          }
        >
          {m.name}
        </button>
      ))}
      <a href="#feedback" className="ml-[2px] whitespace-nowrap text-[#0000ff]">
        提交软件问题或增加新功能
      </a>
      <span className="ml-3 flex h-[17px] w-[70px] items-center gap-[2px] bg-white pl-[3px]">
        <svg viewBox="0 0 18 15" className="h-[15px] w-[18px] shrink-0">
          <path d="M5 1H9L4 14H0ZM11 1H14L18 14H14Z" fill="#1aa79c" />
          <path d="M5 14L9 6L11 9L8 14Z" fill="#1aa79c" />
          <path d="M8 6L12 5L14 10L11 11Z" fill="#0d6d74" />
        </svg>
        <span className="text-[12px] text-[#1c2a48]">MxCAD</span>
      </span>
    </footer>
  );
}

export default function App() {
  return (
    <div className={`flex h-screen min-h-[912px] flex-col border-b border-[#4c555a] bg-[#4c555a] text-black ${sans}`}>
      <TitleBar />
      <div className="mr-px ml-[2px] flex min-h-0 grow flex-col bg-[#e6e6e6]">
        <MenuBar />
        <FileTabs />
        <Toolbars />
        <Workspace />
        <CommandPanel />
        <StatusBar />
      </div>
    </div>
  );
}
